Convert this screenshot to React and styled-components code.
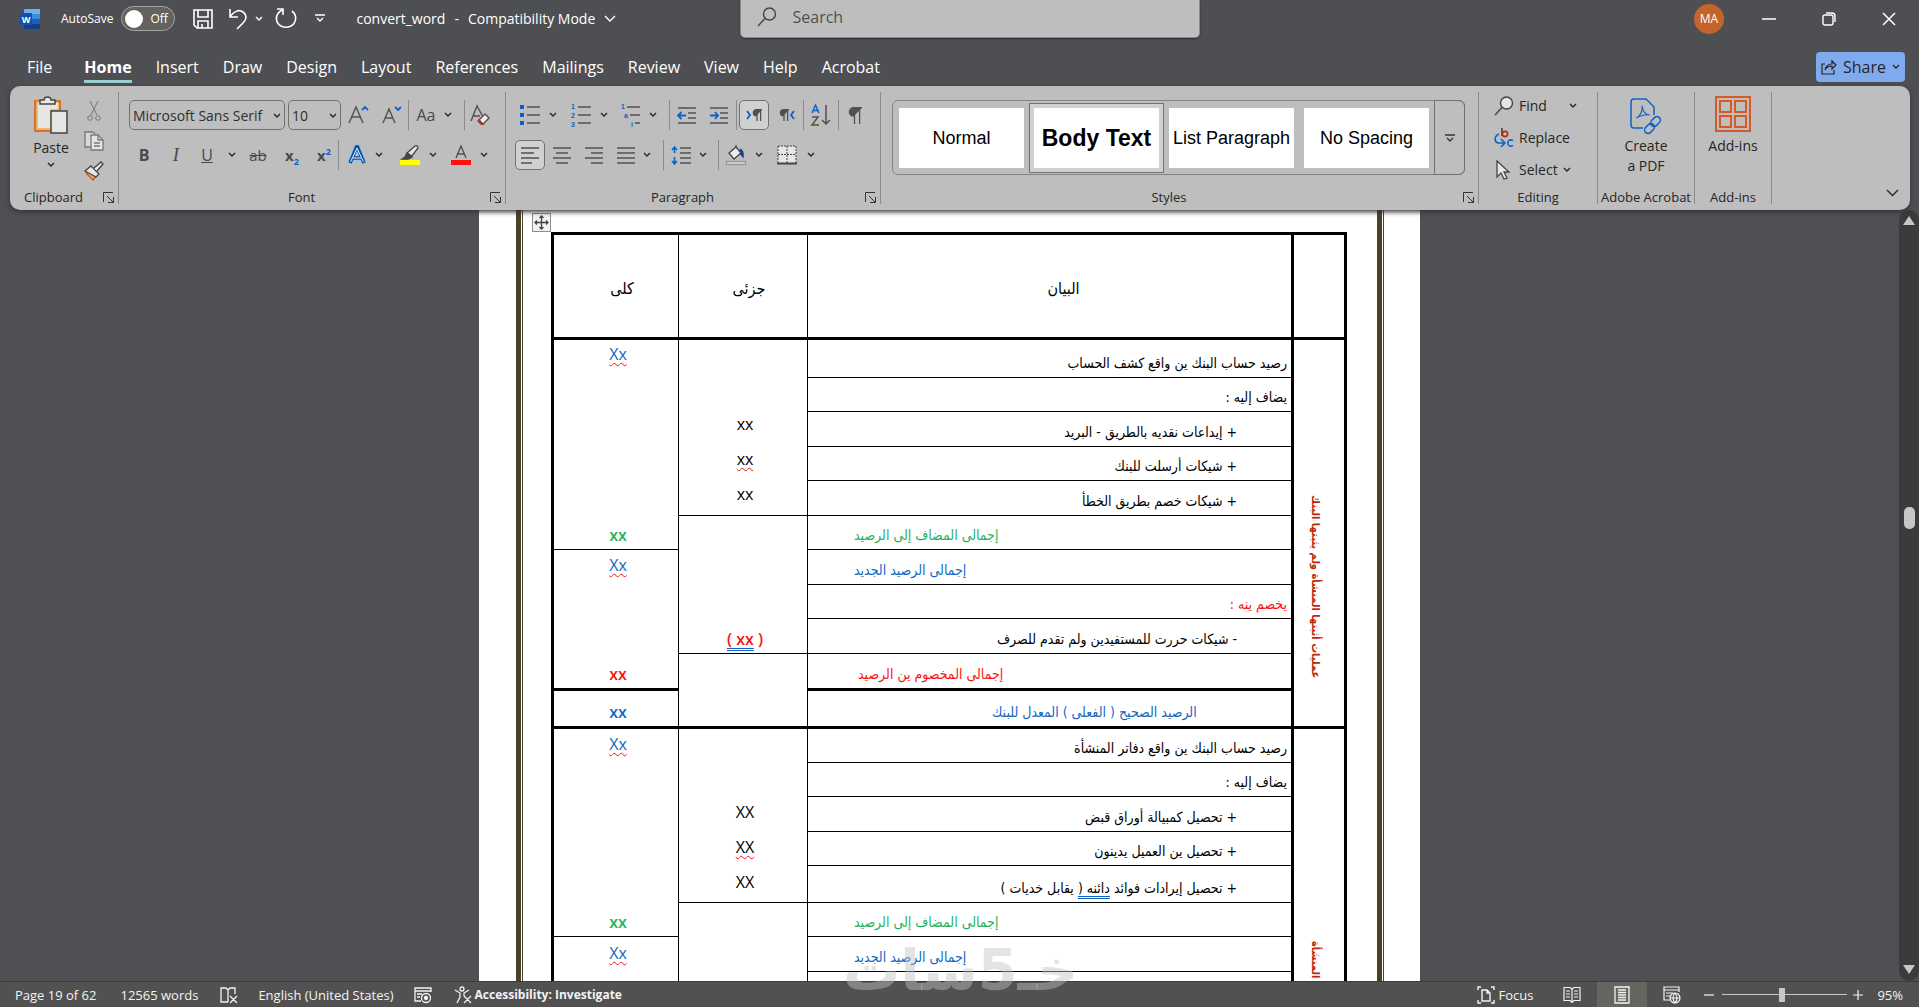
import React from "react";
import styled, { createGlobalStyle, css } from "styled-components";

const GlobalStyle = createGlobalStyle`
  * {
    box-sizing: border-box;
  }

  body {
    margin: 0;
    background: #4e4f53;
    font-family: "Open Sans", "Noto Sans", sans-serif;
    font-size: 14px;
    color: #262626;
  }

  button, input, select {
    font: inherit;
    color: inherit;
    margin: 0;
    padding: 0;
    border: 0;
    background: none;
  }

  svg {
    overflow: visible;
  }
`;

const Window = styled.div`
  position: relative;
  display: flex;
  flex-direction: column;
  height: 100vh;
  overflow: hidden;
`;

/* ---------- title bar ---------- */

const TitleBar = styled.header`
  display: flex;
  align-items: center;
  height: 37px;
  padding-left: 20px;
  color: #fff;
`;

const TitleSide = styled.div`
  flex: 1 1 0;
  display: flex;
  align-items: center;
  justify-content: ${(p) => (p.$end ? "flex-end" : "flex-start")};
  white-space: nowrap;
`;

const AutoSave = styled.label`
  display: flex;
  align-items: center;
  gap: 8px;
  margin-left: 21px;
  font-size: 12px;
`;

const Pill = styled.span`
  display: flex;
  align-items: center;
  gap: 7px;
  width: 54px;
  height: 25px;
  margin-right: 2px;
  padding-left: 3px;
  border: 1px solid #a3a3a0;
  border-radius: 13px;
  background: #62625f;
`;

const Knob = styled.input`
  appearance: none;
  width: 18px;
  height: 18px;
  border-radius: 50%;
  background: #fff;
`;

const TitleButton = styled.button`
  display: flex;
  align-items: center;
  justify-content: center;
  width: ${(p) => p.$w}px;
  height: 36px;
  margin-left: ${(p) => p.$ml || 0}px;
`;

const FileName = styled.div`
  display: flex;
  align-items: center;
  gap: 9px;
  margin-left: 31px;
  font-size: 14px;
`;

const SearchBox = styled.label`
  flex: 0 0 460px;
  display: flex;
  align-items: center;
  gap: 16px;
  height: 38px;
  padding: 0 16px 2px;
  border: 1px solid #8c8c8c;
  border-top: 0;
  border-radius: 0 0 5px 5px;
  background: #bebebe;
  box-shadow: 0 1px 2px #2b2b2b;
  color: #444;
`;

const SearchInput = styled.input`
  flex: 1;
  font-size: 16px;
  outline: none;

  &::placeholder {
    color: #505050;
    opacity: 1;
  }
`;

const Avatar = styled.div`
  width: 30px;
  height: 30px;
  margin-right: 15px;
  border-radius: 50%;
  background: #c3652a;
  font-size: 12px;
  line-height: 30px;
  text-align: center;
`;

/* ---------- tabs ---------- */

const TabBar = styled.nav`
  display: flex;
  align-items: center;
  gap: 24px;
  height: 49px;
  padding: 0 14px 0 27px;
`;

const Tab = styled.a`
  margin-left: ${(p) => (p.$active ? 8 : 0)}px;
  padding: 17px 0 3px;
  border-bottom: 3px solid ${(p) => (p.$active ? "#9ccfd1" : "transparent")};
  color: #fff;
  font-size: 16px;
  font-weight: ${(p) => (p.$active ? 700 : 400)};
  line-height: 20px;
  text-decoration: none;
  white-space: nowrap;
`;

const ShareButton = styled.button`
  display: flex;
  align-items: center;
  justify-content: center;
  gap: 6px;
  width: 89px;
  height: 30px;
  margin: 10px 0 0 auto;
  border-radius: 4px;
  background: #7fabee;
  font-size: 16px;
`;

/* ---------- ribbon ---------- */

const Ribbon = styled.section`
  position: relative;
  z-index: 1;
  display: flex;
  flex: 0 0 124px;
  margin: 0 9px 0 10px;
  padding: 6px 0 0;
  border-radius: 10px;
  background: #bebebe;
  box-shadow: 0 2px 5px #333;
`;

const Group = styled.div`
  display: flex;
  flex-direction: column;
  flex: 0 0 ${(p) => p.$w}px;
  height: 112px;
  border-right: 1px solid #8b8b8b;
`;

const GroupBody = styled.div`
  flex: 1;
  padding: ${(p) => p.$pad || "8px 0 0 10px"};
`;

const GroupLabel = styled.div`
  display: flex;
  align-items: center;
  height: 18px;
  margin-bottom: -2px;
  padding-right: ${(p) => (p.$launcher ? 4 : 0)}px;
  font-size: 13px;
  line-height: 18px;
  white-space: nowrap;

  span {
    flex: 1;
    padding-right: ${(p) => (p.$launcher ? 6 : 0)}px;
    text-align: center;
  }
`;

const Row = styled.div`
  display: flex;
  align-items: center;
  height: 30px;
  margin-bottom: 10px;
`;

const Tool = styled.button`
  flex: none;
  display: flex;
  align-items: center;
  justify-content: center;
  width: ${(p) => p.$w}px;
  height: 30px;
  margin-left: ${(p) => p.$ml || 0}px;
  ${(p) =>
    p.$on &&
    css`
      border: 1px solid #72726c;
      border-radius: 5px;
      background: #d0d0d0;
    `}
`;

const Sep = styled.i`
  flex: none;
  width: 1px;
  height: 30px;
  margin-left: ${(p) => p.$ml || 0}px;
  background: #8b8b8b;
`;

const Combo = styled.div`
  position: relative;
  width: ${(p) => p.$w}px;
  height: 30px;
  margin-right: ${(p) => p.$mr || 0}px;

  select {
    appearance: none;
    width: 100%;
    height: 30px;
    padding-left: 3px;
    border: 1px solid #72726c;
    border-radius: 5px;
    font-size: 14px;
    color: #2f2f2f;
  }

  svg {
    position: absolute;
    top: 13px;
    right: 4px;
    pointer-events: none;
  }
`;

const ClipboardBody = styled.div`
  display: flex;
`;

const BigButton = styled.button`
  display: flex;
  flex-direction: column;
  align-items: center;
  width: ${(p) => p.$w || "100%"};
  line-height: 20px;
  gap: ${(p) => p.$gap || 0}px;
`;

const SmallColumn = styled.div`
  display: flex;
  flex-direction: column;
`;

const Gallery = styled.div`
  display: flex;
  align-items: center;
  height: 75px;
  margin-right: 13px;
  padding-left: 1px;
  border: 1px solid #85857f;
  border-radius: 6px;
`;

const StyleCard = styled.button`
  flex: none;
  width: 135px;
  height: 70px;
  padding: 4px;
  border: 1px solid ${(p) => (p.$active ? "#72726c" : "transparent")};
  background: ${(p) => (p.$active ? "#d0d0d0" : "none")};
  font-family: "Liberation Sans", Arial, sans-serif;
  font-size: ${(p) => (p.$active ? 23 : 18)}px;
  font-weight: ${(p) => (p.$active ? 700 : 400)};
  color: #000;
  white-space: nowrap;

  span {
    display: block;
    height: 60px;
    line-height: 60px;
    background: #fff;
  }
`;

const GalleryMore = styled.button`
  align-self: stretch;
  flex: 1;
  margin: -1px -1px -1px 0;
  border: 1px solid #72726c;
  border-radius: 0 6px 6px 0;
`;

const EditButton = styled.button`
  display: flex;
  align-items: center;
  gap: 5px;
  height: 32px;
  padding-bottom: 5px;
`;

const Collapse = styled.button`
  align-self: flex-end;
  margin: 0 11px 8px auto;
`;

/* ---------- document ---------- */

const Workspace = styled.main`
  flex: 1;
  display: flex;
  min-height: 0;
  background: #4e5054;
`;

const Canvas = styled.div`
  flex: 1;
  display: flex;
  justify-content: center;
  overflow: hidden;
`;

const Paper = styled.article`
  flex: 0 0 941px;
  display: flex;
  padding: 0 36px 0 37px;
  background: #fff;
`;

const PageRule = styled.div`
  width: 7px;
  border-left: 5px solid #4a4129;
  border-right: 1px solid #4a4129;
`;

const PageContent = styled.div`
  flex: 1;
  min-width: 0;
  padding: 3px 30px 0 28px;
`;

const MoveHandle = styled.button`
  display: flex;
  align-items: center;
  justify-content: center;
  width: 19px;
  height: 19px;
  margin-left: -19px;
  border: 1px solid #8e8e8e;
  background: #f2f2f2;
`;

const Ledger = styled.table`
  width: 100%;
  table-layout: fixed;
  border-collapse: collapse;
  border: 3px solid #000;
  color: #000;
  font-family: "DejaVu Sans Condensed", "DejaVu Sans", sans-serif;
  font-size: 14px;
  line-height: 24px;
`;

const LedgerRow = styled.tr`
  height: ${(p) => p.$h}px;
`;

const HeadCell = styled.th`
  padding: 6px 0 0 ${(p) => p.$pl || 0}px;
  border: 1px solid #000;
  border-bottom: 3px solid #000;
  border-left-width: ${(p) => (p.$side ? 3 : 1)}px;
  font-size: 16px;
  font-weight: 400;
`;

const SideCell = styled.td`
  padding: ${(p) => p.$pt}px 8px 0 0;
  border: 3px solid #000;
  vertical-align: top;
  text-align: center;
`;

const SideText = styled.span`
  display: inline-block;
  writing-mode: vertical-rl;
  color: #c0260c;
  font-size: 11px;
  font-weight: 700;
  white-space: nowrap;
`;

const Item = styled.td`
  padding: 0 ${(p) => (p.$indent ? 54 : 4)}px 2px ${(p) => p.$pl || 0}px;
  border: 1px solid #000;
  border-bottom-width: ${(p) => (p.$thick ? 3 : 1)}px;
  color: ${(p) => p.$color || "#000"};
  text-align: ${(p) => (p.$pl ? "left" : "right")};
  vertical-align: bottom;
  white-space: nowrap;
`;

const Amount = styled.td`
  padding: ${(p) => (p.$top ? 4 : 0)}px 0 ${(p) => p.$pb || 2}px 4px;
  border: 1px solid #000;
  border-bottom-width: ${(p) => (p.$thick ? 3 : 1)}px;
  font-family: "Open Sans", sans-serif;
  font-size: 16px;
  text-align: center;
  vertical-align: ${(p) => (p.$top ? "top" : "bottom")};
`;

const Stack = styled.div`
  display: flex;
  flex-direction: column;
  align-items: center;
  gap: ${(p) => p.$gap}px;
`;

const Figure = styled.span`
  color: ${(p) => p.$color || "#000"};
  font-weight: ${(p) => (p.$bold ? 600 : 400)};
  ${(p) =>
    p.$wavy &&
    css`
      text-decoration: underline wavy #f01818 1px;
      text-underline-offset: 2px;
    `}
`;

const Grammar = styled.span`
  text-decoration: underline double #0f62c4 1px;
  text-underline-offset: 3px;
`;

const ScrollBar = styled.div`
  display: flex;
  flex-direction: column;
  align-items: center;
  flex: 0 0 20px;
  padding: 6px 0;
  border-radius: 10px;
  background: #3b3b3b;
`;

const ScrollGap = styled.i`
  flex: ${(p) => p.$grow};
`;

const ScrollThumb = styled.i`
  width: 11px;
  height: 22px;
  border-radius: 5px;
  background: #c6c6c6;
`;

/* ---------- status bar ---------- */

const StatusBar = styled.footer`
  display: flex;
  align-items: center;
  flex: 0 0 26px;
  padding: 0 16px 0 15px;
  border-top: 1px solid #3c3c3c;
  background: #515151;
  color: #f3f3f3;
  font-size: 13px;
  white-space: nowrap;
`;

const StatusItem = styled.button`
  display: flex;
  align-items: center;
  gap: 3px;
  margin-right: ${(p) => p.$mr || 0}px;
  font-size: ${(p) => (p.$bold ? 12 : 13)}px;
  font-weight: ${(p) => (p.$bold ? 700 : 400)};
`;

const ViewButton = styled.button`
  display: flex;
  align-items: center;
  justify-content: center;
  width: 50px;
  height: 25px;
  background: ${(p) => (p.$active ? "#66655f" : "none")};
`;

const ZoomSlider = styled.input`
  appearance: none;
  width: 125px;
  height: 14px;
  margin: 0 6px 0 5px;
  background: linear-gradient(#c6c6c6, #c6c6c6) center / 100% 1px no-repeat;

  &::-webkit-slider-thumb {
    appearance: none;
    width: 6px;
    height: 14px;
    background: #c6c6c6;
  }
`;

const Spacer = styled.span`
  flex: 1;
`;

const Watermark = styled.div`
  position: absolute;
  left: 843px;
  bottom: 4px;
  color: rgba(190, 196, 192, 0.45);
  font-family: "DejaVu Sans", sans-serif;
  font-size: 57px;
  font-weight: 700;
  line-height: 66px;
  pointer-events: none;
`;

/* ---------- icons ---------- */

const Svg = ({ w = 20, h = w, sw = 1, color = "#444", children }) => (
  <svg width={w} height={h} viewBox={`0 0 ${w} ${h}`} fill="none" stroke={color} strokeWidth={sw} aria-hidden="true">
    {children}
  </svg>
);

const Chevron = ({ w = 8, color = "#262626", sw = 1.4 }) => (
  <Svg w={w} h={Math.round(w / 2) + 2} color={color} sw={sw}>
    <path d={`M1 1 L${w / 2} ${w / 2} L${w - 1} 1`} />
  </Svg>
);

const Launcher = () => (
  <Svg w={11} color="#333">
    <path d="M.5 10V.5H10M4 4l6 6M10.500 5v5.500H5" />
  </Svg>
);

const WordLogo = () => (
  <svg width="20" height="20" viewBox="0 0 20 20" aria-hidden="true">
    <rect x="4" width="16" height="20" rx="1" fill="#1b5cbe" />
    <path d="M4 1q0-1 1-1h14q1 0 1 1v4H4z" fill="#6fb0f0" />
    <path d="M4 5h16v5H4z" fill="#3a8ce0" />
    <path d="M4 15h16v4q0 1-1 1H5q-1 0-1-1z" fill="#11408d" />
    <rect y="4" width="12" height="12" rx="1" fill="#1450a8" />
    <text x="6" y="13.500" fontSize="9" fontWeight="700" textAnchor="middle" fill="#fff">W</text>
  </svg>
);

const SaveIcon = () => (
  <Svg w={20} color="#fff" sw={1.600}>
    <path d="M1 1h18v18H4l-3-3zM5 1v7h10V1M5 19v-7h10v7M9 19v-4" />
  </Svg>
);

const UndoIcon = () => (
  <Svg w={20} h={22} color="#fff" sw={1.600}>
    <path d="M2 1v8h8M2 9C6 3 11 1 15 4c4 3 4 7 0 11l-6 6" />
  </Svg>
);

const RedoIcon = () => (
  <Svg w={22} color="#fff" sw={1.600}>
    <path d="M2 1h6v6M7.500 2C1 5 0 11 3 15.500c4 5 12 5 16 0C22 11 21 6 17 3" />
  </Svg>
);

const MoreLine = ({ color = "#fff" }) => (
  <Svg w={10} h={9} color={color} sw={1.400}>
    <path d="M0 1h10M2 4l3 3 3-3" />
  </Svg>
);

const SearchIcon = ({ fill = "none" }) => (
  <Svg w={20} sw={1.400}>
    <circle cx="12.500" cy="7" r="6" fill={fill} />
    <path d="M8 11.500L1 19" />
  </Svg>
);

const PasteIcon = () => (
  <Svg w={34} h={38} sw={1.500}>
    <path d="M6 5H1v30h17" stroke="#d9702c" strokeWidth="2" />
    <path d="M3 6h22v8h-8v19H3z" fill="#e6e6e6" stroke="#f0b054" />
    <path d="M21 5h5v9" stroke="#d9702c" strokeWidth="2" />
    <path d="M6 8V4h4q0-3 3.500-3T17 4h4v4z" fill="#e6e6e6" />
    <path d="M17 15h16v22H17z" fill="#e6e6e6" />
  </Svg>
);

const CutIcon = () => (
  <Svg w={14} h={20} color="#777">
    <path d="M3 0l7 14M11 0L4 14" />
    <circle cx="3" cy="17" r="2.300" />
    <circle cx="11" cy="17" r="2.300" />
  </Svg>
);

const CopyIcon = () => (
  <Svg w={20} color="#777" sw={1.300}>
    <path d="M7 16H1V1h8l2 2" fill="#d8d8d8" />
    <path d="M7 4h7l5 5v10H7z" fill="#e4e4e4" />
    <path d="M14 4v5h5M10 12h6M10 15h6" />
  </Svg>
);

const BrushIcon = () => (
  <Svg w={20} sw={1.300}>
    <path d="M2 12l7 7 4-5-6-6z" fill="#f3a36a" stroke="#c9571c" />
    <path d="M1 10l6-5 8 8-3 3z" fill="#e6e6e6" />
    <path d="M10 7l7-6 2 2-6 7" fill="#e6e6e6" />
  </Svg>
);

const GrowIcon = ({ down }) => (
  <Svg w={20} color="#505050" sw={1.400}>
    <path d={down ? "M2 18L8 4l6 14M4 13h8" : "M1 18L8 2l7 16M3 12h10"} />
    <path d={down ? "M14 2l3 3 3-3" : "M14 5l3-3 3 3"} stroke="#0f62c4" strokeWidth="1.800" />
  </Svg>
);

const ClearIcon = () => (
  <Svg w={20} color="#505050" sw={1.400}>
    <path d="M1 16L7 1l6 11M3 11h7" />
    <path d="M9 15l6-6 4 4-6 6h-1z" fill="#eee" />
    <path d="M9 15l4 4h-2l-3-3z" fill="#d94a30" stroke="#b03020" />
  </Svg>
);

const Letter = styled.span`
  color: ${(p) => p.$color || "#4a4a4a"};
  font-size: ${(p) => p.$size || 16}px;
  font-weight: ${(p) => (p.$bold ? 700 : 400)};
  font-style: ${(p) => (p.$italic ? "italic" : "normal")};
  font-family: ${(p) => (p.$italic ? '"Liberation Serif", serif' : "inherit")};
  text-decoration: ${(p) => p.$line || "none"};
  line-height: 20px;

  sub, sup {
    color: #0f62c4;
    font-size: 9px;
    font-weight: 700;
    line-height: 0;
  }
`;

const EffectsIcon = () => (
  <Svg w={20}>
    <path d="M3 18L9.500 2h1L17 18M6 13h8" stroke="#7cc4ee" strokeWidth="5" />
    <path d="M3 18L9.500 2h1L17 18M6 13h8" stroke="#134a9a" strokeWidth="3.400" />
    <path d="M3.500 17L10 3l6.500 14M6 13h8" stroke="#e8f2fa" strokeWidth="1" />
  </Svg>
);

const HighlightIcon = () => (
  <Svg w={20} sw={1.300}>
    <path d="M7 8l8-7q3-1 3 2l-6 8z" fill="#e6e6e6" />
    <path d="M7 8l5 4-4 2H2l3-2z" fill="#444" />
    <path d="M0 17.500h20" stroke="#ffff00" strokeWidth="5" />
  </Svg>
);

const FontColorIcon = () => (
  <Svg w={20} color="#505050" sw={1.400}>
    <path d="M5 13L10 1l5 12M7 9h6" />
    <path d="M0 17.500h20" stroke="#ff1010" strokeWidth="5" />
  </Svg>
);

const LineList = ({ lines, w = 20, h = 18, children }) => (
  <Svg w={w} h={h} color="#505050" sw={1.500}>
    {lines.map(([x1, x2, y], i) => (
      <path key={i} d={`M${x1} ${y}H${x2}`} />
    ))}
    {children}
  </Svg>
);

const alignLines = {
  left: [[1, 19, 2], [1, 14, 7], [1, 19, 12], [1, 12, 17]],
  center: [[1, 19, 2], [4, 16, 7], [1, 19, 12], [4, 16, 17]],
  right: [[1, 19, 2], [7, 19, 7], [1, 19, 12], [7, 19, 17]],
  justify: [[1, 19, 2], [1, 19, 7], [1, 19, 12], [1, 19, 17]],
};

const BulletIcon = () => (
  <LineList h={24} lines={[[7, 20, 4], [7, 20, 12], [7, 20, 20]]}>
    <path d="M0 4h4M0 12h4M0 20h4" stroke="#0f62c4" strokeWidth="4" />
  </LineList>
);

const Digit = ({ x, y, children }) => (
  <text x={x} y={y} fontFamily="Liberation Sans" fontSize="7" fontWeight="700" fill="#0f62c4" stroke="none">
    {children}
  </text>
);

const NumberIcon = () => (
  <LineList h={24} lines={[[7, 20, 4], [7, 20, 12], [7, 20, 20]]}>
    <Digit x={0} y={6}>1</Digit>
    <Digit x={0} y={15}>2</Digit>
    <Digit x={0} y={24}>3</Digit>
  </LineList>
);

const MultiIcon = () => (
  <LineList h={24} lines={[[6, 19, 4], [9, 19, 12], [14, 19, 20]]}>
    <Digit x={0} y={6}>1</Digit>
    <Digit x={3} y={15}>a</Digit>
    <Digit x={10} y={24}>i</Digit>
  </LineList>
);

const IndentIcon = ({ dir }) => (
  <LineList lines={[[1, 19, 2], [11, 19, 7], [11, 19, 12], [1, 19, 17]]}>
    <path d={dir === "in" ? "M1 9.500h8M6 6l3 3.500L6 13" : "M9 9.500H1M4.500 6L1 9.500 4.500 13"} stroke="#0f62c4" strokeWidth="1.800" />
  </LineList>
);

const Pilcrow = ({ h = 13 }) => (
  <Svg w={h} h={h} color="#505050" sw={1.300}>
    <path d={`M${h - 1} .7H${h * 0.45}a${h * 0.25} ${h * 0.25} 0 0 0 0 ${h * 0.5}`} fill="#505050" />
    <path d={`M${h * 0.5} 0V${h}M${h * 0.8} 0V${h}`} />
  </Svg>
);

const Angle = ({ left }) => (
  <Svg w={5} h={10} color="#0f62c4" sw={1.800}>
    <path d={left ? "M4 1L1 5l3 4" : "M1 1l3 4-3 4"} />
  </Svg>
);

const SortIcon = () => (
  <Svg w={20} h={22} color="#505050" sw={1.500}>
    <path d="M1 9L4.500 1 8 9M2 6.500h5" stroke="#0f62c4" />
    <path d="M1 13h6l-6 8h7M15 1v19M11 16l4 4 4-4" />
  </Svg>
);

const SpacingIcon = () => (
  <LineList lines={[[9, 20, 2], [9, 20, 7], [9, 20, 12], [9, 20, 17]]}>
    <path d="M3.500 1v6M1 4l2.500-3L6 4M3.500 11v7M1 15l2.500 3L6 15" stroke="#0f62c4" strokeWidth="1.600" />
  </LineList>
);

const ShadingIcon = () => (
  <Svg w={20} sw={1.300}>
    <path d="M3 8l7-6 5 6-7 6zM10 2V0" fill="#eee" />
    <path d="M14 4q4 2 3 8l-3-4" fill="#1c3f86" stroke="#1c3f86" />
    <path d="M.5 16.500h19v3H.5z" fill="#ddd" stroke="#999" />
  </Svg>
);

const BordersIcon = () => (
  <Svg w={20}>
    <path d="M1 1h18v17H1z" fill="#e6e6e6" stroke="none" />
    <path d="M1 1h18v17M1 1v17M10 1v17M1 9.500h18" strokeDasharray="2 1" />
    <path d="M0 18.500h20" strokeWidth="2" />
  </Svg>
);

const ReplaceIcon = () => (
  <Svg w={20} sw={1.600}>
    <path d="M8 0v8" />
    <circle cx="11" cy="6" r="2.600" stroke="#b92a1a" />
    <path d="M5 6C0 8 0 14 4 15h6M7 11l4 4-4 4" stroke="#0f62c4" />
    <path d="M19 12.500q-5-2-5 2.500t5 2.500" stroke="#0f62c4" />
  </Svg>
);

const PointerIcon = () => (
  <Svg w={20} sw={1.300}>
    <path d="M3 1l12 11H10l3 6-3 1-3-6-4 4z" fill="#e6e6e6" />
  </Svg>
);

const PdfIcon = () => (
  <Svg w={32} h={38} color="#0f62c4" sw={1.500}>
    <path d="M13 30H4q-3 0-3-3V4q0-3 3-3h12l8 8v8" />
    <path d="M6 20c5-2 7-8 6-12 1 6 3 9 8 9-5-1-10 1-14 3z" strokeWidth="1.200" />
    <rect x="14" y="27" width="11" height="7" rx="3.500" transform="rotate(-45 19.500 30.500)" />
    <rect x="20" y="20" width="11" height="7" rx="3.500" transform="rotate(-45 25.500 23.500)" />
  </Svg>
);

const AddinsIcon = () => (
  <Svg w={36} color="#d55a26" sw={2}>
    <path d="M1 1h34v34H1zM5 5h11v11H5zM20 5h11v11H20zM5 20h11v11H5zM20 20h11v11H20z" />
  </Svg>
);

const ShareIcon = () => (
  <Svg w={16} sw={1.200} color="#262626">
    <path d="M4 5H1v10h12v-4M4 11q1-6 7-6V2l4 4-4 4V7q-5 0-7 4z" />
  </Svg>
);

const ProofIcon = () => (
  <Svg w={18} color="#f3f3f3" sw={1.300}>
    <path d="M8 16H1V2h5l2 2 2-2h5v6M8 4v12M10 10l7 7M17 10l-7 7" />
  </Svg>
);

const MacroIcon = () => (
  <Svg w={18} color="#f3f3f3" sw={1.300}>
    <path d="M7 15H1V2h16v4M1 5h16M3 8h5M3 11h3" />
    <circle cx="12" cy="12" r="4.500" />
    <circle cx="12" cy="12" r="1.500" fill="#f3f3f3" />
  </Svg>
);

const AccessIcon = () => (
  <Svg w={18} color="#f3f3f3" sw={1.300}>
    <circle cx="8" cy="3" r="2" />
    <path d="M1 4l5 3v4l-3 6M15 4l-5 3v3M10 10l7 7M17 10l-7 7" />
  </Svg>
);

const FocusIcon = () => (
  <Svg w={18} color="#f3f3f3" sw={1.400}>
    <path d="M1 4V1h3M14 1h3v3M1 14v3h3M14 17h3v-3M5 4h5l3 3v8H5zM10 4v3h3" />
  </Svg>
);

const ReadIcon = () => (
  <Svg w={18} color="#f3f3f3" sw={1.200}>
    <path d="M9 3L7 1.500H1v13h6l2 2 2-2h6v-13h-6zM9 3v13M3 5h4M3 8h4M3 11h4M11 5h4M11 8h4M11 11h4" />
  </Svg>
);

const PrintIcon = () => (
  <Svg w={16} h={18} color="#f3f3f3" sw={1.300}>
    <path d="M1 1h14v16H1zM4 4h8M4 6.500h8M4 9h8M4 11.500h8M4 14h8" />
  </Svg>
);

const WebIcon = () => (
  <Svg w={18} color="#f3f3f3" sw={1.200}>
    <path d="M7 14H1V1h15v5M1 4h15M3 7h7M3 10h4" />
    <circle cx="12" cy="12" r="5" />
    <path d="M7 12h10M12 7q-4 5 0 10q4-5 0-10" />
  </Svg>
);

/* ---------- data ---------- */

const tabs = ["File", "Home", "Insert", "Draw", "Design", "Layout", "References", "Mailings", "Review", "View", "Help", "Acrobat"];

const styleNames = ["Normal", "Body Text", "List Paragraph", "No Spacing"];

const BLUE = "#0f68c4";
const GREEN = "#1fb25a";
const RED = "#ff1010";

const ChevTool = ({ w = 12, ml }) => (
  <Tool $w={w} $ml={ml} as="span">
    <Chevron />
  </Tool>
);

const Label = ({ children, launcher }) => (
  <GroupLabel $launcher={launcher}>
    <span>{children}</span>
    {launcher && <Launcher />}
  </GroupLabel>
);

const TitleArea = () => (
  <TitleBar>
    <TitleSide>
      <WordLogo />
      <AutoSave>
        AutoSave
        <Pill>
          <Knob type="checkbox" role="switch" />
          Off
        </Pill>
      </AutoSave>
      <TitleButton $w={20} $ml={16} aria-label="Save"><SaveIcon /></TitleButton>
      <TitleButton $w={20} $ml={15} aria-label="Undo"><UndoIcon /></TitleButton>
      <TitleButton $w={10} $ml={6} aria-label="Undo list"><Chevron color="#fff" /></TitleButton>
      <TitleButton $w={22} $ml={11} aria-label="Repeat"><RedoIcon /></TitleButton>
      <TitleButton $w={10} $ml={18} aria-label="Customize toolbar"><MoreLine /></TitleButton>
      <FileName>
        <span>convert_word</span>
        <span>-</span>
        <span>Compatibility Mode</span>
        <Chevron w={12} color="#fff" />
      </FileName>
    </TitleSide>
    <SearchBox>
      <SearchIcon />
      <SearchInput type="text" placeholder="Search" aria-label="Search" />
    </SearchBox>
    <TitleSide $end>
      <Avatar>MA</Avatar>
      <TitleButton $w={60} aria-label="Minimize">
        <Svg w={14} color="#fff" sw={1.500}><path d="M0 7h14" /></Svg>
      </TitleButton>
      <TitleButton $w={60} aria-label="Restore">
        <Svg w={14} color="#fff" sw={1.400}>
          <rect x="1" y="3" width="10" height="10" rx="2" />
          <path d="M4 1h6q3 0 3 3v6" />
        </Svg>
      </TitleButton>
      <TitleButton $w={60} aria-label="Close">
        <Svg w={14} color="#fff" sw={1.500}><path d="M1 1l12 12M13 1L1 13" /></Svg>
      </TitleButton>
    </TitleSide>
  </TitleBar>
);

const FontGroup = () => (
  <Group $w={387}>
    <GroupBody>
      <Row>
        <Combo $w={156} $mr={3}>
          <select aria-label="Font"><option>Microsoft Sans Serif</option></select>
          <Chevron />
        </Combo>
        <Combo $w={53}>
          <select aria-label="Font size"><option>10</option></select>
          <Chevron />
        </Combo>
        <Tool $w={26} $ml={4} aria-label="Grow font"><GrowIcon /></Tool>
        <Tool $w={26} $ml={7} aria-label="Shrink font"><GrowIcon down /></Tool>
        <Sep $ml={4} />
        <Tool $w={28} $ml={3} aria-label="Change case"><Letter>Aa</Letter></Tool>
        <ChevTool ml={2} />
        <Sep $ml={10} />
        <Tool $w={28} $ml={1} aria-label="Clear formatting"><ClearIcon /></Tool>
      </Row>
      <Row>
        <Tool $w={30} aria-label="Bold"><Letter $bold>B</Letter></Tool>
        <Tool $w={28} $ml={3} aria-label="Italic"><Letter $italic $size={19}>I</Letter></Tool>
        <Tool $w={28} $ml={3} aria-label="Underline"><Letter $line="underline">U</Letter></Tool>
        <ChevTool ml={5} />
        <Tool $w={28} $ml={6} aria-label="Strikethrough"><Letter $line="line-through" $size={15}>ab</Letter></Tool>
        <Tool $w={28} $ml={6} aria-label="Subscript"><Letter $bold $size={15}>x<sub>2</sub></Letter></Tool>
        <Tool $w={28} $ml={4} aria-label="Superscript"><Letter $bold $size={15}>x<sup>2</sup></Letter></Tool>
        <Sep />
        <Tool $w={28} $ml={4} aria-label="Text effects"><EffectsIcon /></Tool>
        <ChevTool ml={2} />
        <Tool $w={28} $ml={11} aria-label="Highlight"><HighlightIcon /></Tool>
        <ChevTool ml={3} />
        <Tool $w={28} $ml={8} aria-label="Font color"><FontColorIcon /></Tool>
        <ChevTool ml={3} />
      </Row>
    </GroupBody>
    <Label launcher>Font</Label>
  </Group>
);

const ParagraphGroup = () => (
  <Group $w={375}>
    <GroupBody $pad="8px 0 0 9px">
      <Row>
        <Tool $w={30} aria-label="Bullets"><BulletIcon /></Tool>
        <ChevTool ml={2} />
        <Tool $w={30} $ml={7} aria-label="Numbering"><NumberIcon /></Tool>
        <ChevTool ml={2} />
        <Tool $w={30} $ml={6} aria-label="Multilevel list"><MultiIcon /></Tool>
        <ChevTool ml={1} />
        <Sep $ml={10} />
        <Tool $w={28} $ml={3} aria-label="Decrease indent"><IndentIcon /></Tool>
        <Tool $w={28} $ml={4} aria-label="Increase indent"><IndentIcon dir="in" /></Tool>
        <Sep $ml={3} />
        <Tool $w={30} $ml={2} $on aria-label="Left to right"><Angle /><Pilcrow h={12} /></Tool>
        <Tool $w={30} $ml={2} aria-label="Right to left"><Pilcrow h={12} /><Angle left /></Tool>
        <Sep $ml={2} />
        <Tool $w={28} $ml={3} aria-label="Sort"><SortIcon /></Tool>
        <Sep $ml={3} />
        <Tool $w={28} $ml={1} aria-label="Show marks"><Pilcrow h={17} /></Tool>
      </Row>
      <Row>
        <Tool $w={30} $on aria-label="Align left"><LineList lines={alignLines.left} /></Tool>
        <Tool $w={30} $ml={2} aria-label="Center"><LineList lines={alignLines.center} /></Tool>
        <Tool $w={30} $ml={2} aria-label="Align right"><LineList lines={alignLines.right} /></Tool>
        <Tool $w={30} $ml={2} aria-label="Justify"><LineList lines={alignLines.justify} /></Tool>
        <ChevTool />
        <Sep $ml={10} />
        <Tool $w={28} $ml={3} aria-label="Line spacing"><SpacingIcon /></Tool>
        <ChevTool ml={2} />
        <Sep $ml={9} />
        <Tool $w={28} $ml={3} aria-label="Shading"><ShadingIcon /></Tool>
        <ChevTool ml={3} />
        <Tool $w={28} $ml={8} aria-label="Borders"><BordersIcon /></Tool>
        <ChevTool ml={4} />
      </Row>
    </GroupBody>
    <Label launcher>Paragraph</Label>
  </Group>
);

const RibbonArea = () => (
  <Ribbon>
    <Group $w={109}>
      <GroupBody $pad="4px 0 0 18px">
        <ClipboardBody>
          <BigButton $w="46px" $gap={4}>
            <PasteIcon />
            Paste
            <Chevron />
          </BigButton>
          <SmallColumn>
            <Tool $w={40} aria-label="Cut"><CutIcon /></Tool>
            <Tool $w={40} aria-label="Copy"><CopyIcon /></Tool>
            <Tool $w={40} aria-label="Format painter"><BrushIcon /></Tool>
          </SmallColumn>
        </ClipboardBody>
      </GroupBody>
      <Label launcher>Clipboard</Label>
    </Group>
    <FontGroup />
    <ParagraphGroup />
    <Group $w={598}>
      <GroupBody $pad="8px 0 0 11px">
        <Gallery>
          {styleNames.map((name) => (
            <StyleCard key={name} $active={name === "Body Text"}>
              <span>{name}</span>
            </StyleCard>
          ))}
          <GalleryMore aria-label="More styles"><MoreLine color="#333" /></GalleryMore>
        </Gallery>
      </GroupBody>
      <Label launcher>Styles</Label>
    </Group>
    <Group $w={119}>
      <GroupBody $pad="0 0 0 15px">
        <EditButton><SearchIcon fill="#e6e6e6" />Find<ChevTool ml={15} /></EditButton>
        <EditButton><ReplaceIcon />Replace</EditButton>
        <EditButton><PointerIcon />Select<Chevron /></EditButton>
      </GroupBody>
      <Label>Editing</Label>
    </Group>
    <Group $w={97}>
      <GroupBody $pad="6px 0 0">
        <BigButton><PdfIcon /><span>Create<br />a PDF</span></BigButton>
      </GroupBody>
      <Label>Adobe Acrobat</Label>
    </Group>
    <Group $w={77}>
      <GroupBody $pad="4px 0 0">
        <BigButton $gap={4}><AddinsIcon />Add-ins</BigButton>
      </GroupBody>
      <Label>Add-ins</Label>
    </Group>
    <Collapse aria-label="Collapse ribbon"><Chevron w={13} /></Collapse>
  </Ribbon>
);

const BankTable = () => (
  <Ledger dir="rtl">
    <colgroup>
      <col style={{ width: 53 }} />
      <col />
      <col style={{ width: 129 }} />
      <col style={{ width: 126 }} />
    </colgroup>
    <thead>
      <LedgerRow $h={105}>
        <HeadCell $side />
        <HeadCell $pl={28}>البيان</HeadCell>
        <HeadCell $pl={12}>جزئى</HeadCell>
        <HeadCell $pl={12}>كلى</HeadCell>
      </LedgerRow>
    </thead>
    <tbody>
      <LedgerRow $h={39}>
        <SideCell rowSpan={11} $pt={155}>
          <SideText>عمليات أثبتها المنشأة ولم يثبتها البنك</SideText>
        </SideCell>
        <Item>رصيد حساب البنك ين واقع كشف الحساب</Item>
        <Amount rowSpan={5} $pb={9}>
          <Stack $gap={11}>
            <Figure>xx</Figure>
            <Figure $wavy>xx</Figure>
            <Figure>xx</Figure>
          </Stack>
        </Amount>
        <Amount rowSpan={6}>
          <Stack $gap={157}>
            <Figure $color={BLUE} $wavy>Xx</Figure>
            <Figure $color={GREEN} $bold>xx</Figure>
          </Stack>
        </Amount>
      </LedgerRow>
      <LedgerRow $h={34}><Item>يضاف إليه :</Item></LedgerRow>
      <LedgerRow $h={35}><Item $indent>+ إيداعات نقديه بالطريق - البريد</Item></LedgerRow>
      <LedgerRow $h={34}><Item $indent>+ شيكات أرسلت للبنك</Item></LedgerRow>
      <LedgerRow $h={35}><Item $indent>+ شيكات خصم بطريق الخطأ</Item></LedgerRow>
      <LedgerRow $h={34}>
        <Item $pl={46} $color={GREEN}>إجمالى المضاف إلى الرصيد</Item>
        <Amount rowSpan={4}>
          <Figure $color={RED} $bold dir="ltr"><Grammar>( xx</Grammar> )</Figure>
        </Amount>
      </LedgerRow>
      <LedgerRow $h={35}>
        <Item $pl={46} $color={BLUE}>إجمالى الرصيد الجديد</Item>
        <Amount rowSpan={4} $thick>
          <Stack $gap={85}>
            <Figure $color={BLUE} $wavy>Xx</Figure>
            <Figure $color={RED} $bold>xx</Figure>
          </Stack>
        </Amount>
      </LedgerRow>
      <LedgerRow $h={34}><Item $color={RED}>يخصم ينه :</Item></LedgerRow>
      <LedgerRow $h={35}><Item $indent>- شيكات حررت للمستفيدين ولم تقدم للصرف</Item></LedgerRow>
      <LedgerRow $h={36}>
        <Item $pl={50} $color={RED} $thick>إجمالى المخصوم ين الرصيد</Item>
        <Amount rowSpan={2} $thick />
      </LedgerRow>
      <LedgerRow $h={38}>
        <Item $pl={184} $color={BLUE} $thick>الرصيد الصحيح ( الفعلى ) المعدل للبنك</Item>
        <Amount $thick><Figure $color={BLUE} $bold>xx</Figure></Amount>
      </LedgerRow>
      <LedgerRow $h={35}>
        <SideCell rowSpan={8} $pt={212}>
          <SideText>المنشأة</SideText>
        </SideCell>
        <Item>رصيد حساب البنك ين واقع دفاتر المنشأة</Item>
        <Amount rowSpan={5} $pb={8}>
          <Stack $gap={11}>
            <Figure>XX</Figure>
            <Figure $wavy>XX</Figure>
            <Figure>XX</Figure>
          </Stack>
        </Amount>
        <Amount rowSpan={6}>
          <Stack $gap={154}>
            <Figure $color={BLUE} $wavy>Xx</Figure>
            <Figure $color={GREEN} $bold>xx</Figure>
          </Stack>
        </Amount>
      </LedgerRow>
      <LedgerRow $h={34}><Item>يضاف إليه :</Item></LedgerRow>
      <LedgerRow $h={35}><Item $indent>+ تحصيل كمبيالة أوراق قبض</Item></LedgerRow>
      <LedgerRow $h={34}><Item $indent>+ تحصيل ين العميل يدينون</Item></LedgerRow>
      <LedgerRow $h={37}>
        <Item $indent>+ تحصيل إيرادات فوائد <Grammar>دائنه (</Grammar> يقابل خديات )</Item>
      </LedgerRow>
      <LedgerRow $h={34}>
        <Item $pl={46} $color={GREEN}>إجمالى المضاف إلى الرصيد</Item>
        <Amount rowSpan={3} />
      </LedgerRow>
      <LedgerRow $h={35}>
        <Item $pl={46} $color={BLUE}>إجمالى الرصيد الجديد</Item>
        <Amount rowSpan={2} $top><Figure $color={BLUE} $wavy>Xx</Figure></Amount>
      </LedgerRow>
      <LedgerRow $h={34}><Item /></LedgerRow>
    </tbody>
  </Ledger>
);

const StatusArea = () => (
  <StatusBar>
    <StatusItem $mr={24}>Page 19 of 62</StatusItem>
    <StatusItem $mr={22}>12565 words</StatusItem>
    <StatusItem $mr={20} aria-label="Proofing"><ProofIcon /></StatusItem>
    <StatusItem $mr={20}>English (United States)</StatusItem>
    <StatusItem $mr={22} aria-label="Macros"><MacroIcon /></StatusItem>
    <StatusItem $bold><AccessIcon />Accessibility: Investigate</StatusItem>
    <Spacer />
    <StatusItem $mr={14}><FocusIcon />Focus</StatusItem>
    <ViewButton aria-label="Read mode"><ReadIcon /></ViewButton>
    <ViewButton $active aria-label="Print layout"><PrintIcon /></ViewButton>
    <ViewButton aria-label="Web layout"><WebIcon /></ViewButton>
    <StatusItem aria-label="Zoom out">
      <Svg w={20} h={12} color="#f3f3f3" sw={1.200}><path d="M7 6h10" /></Svg>
    </StatusItem>
    <ZoomSlider type="range" min="0" max="100" defaultValue="48" aria-label="Zoom" />
    <StatusItem aria-label="Zoom in" $mr={14}>
      <Svg w={10} h={12} color="#f3f3f3" sw={1.200}><path d="M0 6h10M5 1v10" /></Svg>
    </StatusItem>
    <StatusItem>95%</StatusItem>
  </StatusBar>
);

const App = () => {
  return (
    <Window>
      <GlobalStyle />
      <TitleArea />
      <TabBar>
        {tabs.map((tab) => (
          <Tab key={tab} href={"#" + tab.toLowerCase()} $active={tab === "Home"}>{tab}</Tab>
        ))}
        <ShareButton><ShareIcon />Share<Chevron /></ShareButton>
      </TabBar>
      <RibbonArea />
      <Workspace>
        <Canvas>
          <Paper>
            <PageRule />
            <PageContent>
              <MoveHandle aria-label="Move table">
                <Svg w={15} sw={1.300}>
                  <path d="M7.500 1v13M1 7.500h13M5.500 3l2-2 2 2M5.500 12l2 2 2-2M3 5.500l-2 2 2 2M12 5.500l2 2-2 2" />
                </Svg>
              </MoveHandle>
              <BankTable />
            </PageContent>
            <PageRule />
          </Paper>
        </Canvas>
        <ScrollBar>
          <Svg w={12} h={10} color="none"><path d="M6 0l6 9H0z" fill="#c6c6c6" /></Svg>
          <ScrollGap $grow={283} />
          <ScrollThumb />
          <ScrollGap $grow={439} />
          <Svg w={12} h={10} color="none"><path d="M0 0h12L6 9z" fill="#c6c6c6" /></Svg>
        </ScrollBar>
      </Workspace>
      <StatusArea />
      <Watermark dir="rtl">خـ5سات</Watermark>
    </Window>
  );
};

export default App;
